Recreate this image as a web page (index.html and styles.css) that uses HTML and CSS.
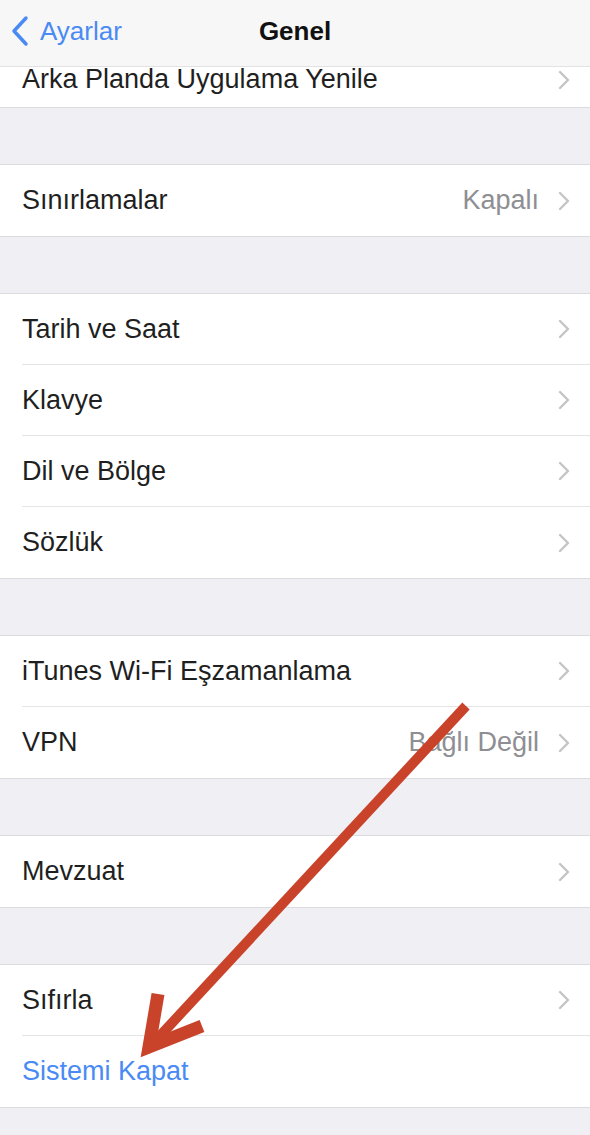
FILE: index.html
```html
<!DOCTYPE html>
<html lang="tr">
<head>
  <meta charset="UTF-8">
  <meta name="viewport" content="width=device-width, initial-scale=1.0">
  <title>Genel</title>
  <link rel="stylesheet" href="styles.css">
</head>
<body>
  <div class="screen">
    <header class="nav-bar">
      <a class="back" href="#">
        <svg class="back-icon" viewBox="0 0 20 32" width="20" height="32"><path d="M16 3 L4 16 L16 29" /></svg>
        <span>Ayarlar</span>
      </a>
      <h1>Genel</h1>
    </header>

    <div class="settings">
      <ul class="group first">
        <li class="row"><span class="label">Arka Planda Uygulama Yenile</span><svg class="chev" viewBox="0 0 12 20"><path d="M2 2 L10 10 L2 18" /></svg></li>
      </ul>

      <ul class="group">
        <li class="row"><span class="label">Sınırlamalar</span><span class="detail">Kapalı</span><svg class="chev" viewBox="0 0 12 20"><path d="M2 2 L10 10 L2 18" /></svg></li>
      </ul>

      <ul class="group">
        <li class="row"><span class="label">Tarih ve Saat</span><svg class="chev" viewBox="0 0 12 20"><path d="M2 2 L10 10 L2 18" /></svg></li>
        <li class="row"><span class="label">Klavye</span><svg class="chev" viewBox="0 0 12 20"><path d="M2 2 L10 10 L2 18" /></svg></li>
        <li class="row"><span class="label">Dil ve Bölge</span><svg class="chev" viewBox="0 0 12 20"><path d="M2 2 L10 10 L2 18" /></svg></li>
        <li class="row"><span class="label">Sözlük</span><svg class="chev" viewBox="0 0 12 20"><path d="M2 2 L10 10 L2 18" /></svg></li>
      </ul>

      <ul class="group">
        <li class="row"><span class="label">iTunes Wi-Fi Eşzamanlama</span><svg class="chev" viewBox="0 0 12 20"><path d="M2 2 L10 10 L2 18" /></svg></li>
        <li class="row"><span class="label">VPN</span><span class="detail">Bağlı Değil</span><svg class="chev" viewBox="0 0 12 20"><path d="M2 2 L10 10 L2 18" /></svg></li>
      </ul>

      <ul class="group">
        <li class="row"><span class="label">Mevzuat</span><svg class="chev" viewBox="0 0 12 20"><path d="M2 2 L10 10 L2 18" /></svg></li>
      </ul>

      <ul class="group">
        <li class="row"><span class="label">Sıfırla</span><svg class="chev" viewBox="0 0 12 20"><path d="M2 2 L10 10 L2 18" /></svg></li>
        <li class="row"><span class="label action">Sistemi Kapat</span></li>
      </ul>
    </div>

    <!-- annotation arrow pointing at the shut down row -->
    <svg class="pointer" viewBox="0 0 590 1135" width="590" height="1135">
      <line x1="466" y1="706" x2="158" y2="1038" />
      <polyline points="158,994 149,1047 202,1026" />
    </svg>
  </div>
</body>
</html>
```

FILE: styles.css
```css
body {
  margin: 0;
  background: #efeff4;
  font-family: 'Liberation Sans', Arial, sans-serif;
  color: #1f1f1f;
}
.screen {
  position: relative;
  width: 590px;
  height: 1135px;
  overflow: hidden;
}
.nav-bar {
  position: absolute;
  top: 0;
  left: 0;
  right: 0;
  height: 66px;
  background: rgba(247, 247, 247, 0.97);
  border-bottom: 1px solid #e2e2e4;
  display: flex;
  align-items: center;
  justify-content: center;
  z-index: 2;
}
.nav-bar h1 {
  margin: 0;
  font-size: 26px;
  font-weight: bold;
  color: #111;
  padding-bottom: 3px;
}
.back {
  position: absolute;
  left: 10px;
  top: 15px;
  display: flex;
  align-items: center;
  gap: 10px;
  color: #4a8af4;
  text-decoration: none;
  font-size: 26px;
}
.back-icon path {
  fill: none;
  stroke: #4a8af4;
  stroke-width: 3.5;
  stroke-linecap: round;
  stroke-linejoin: round;
}
.settings {
  padding-top: 36px;
}
.group {
  list-style: none;
  margin: 0 0 56px;
  padding: 0;
  background: #fff;
  border-top: 1px solid #dcdce0;
  border-bottom: 1px solid #dcdce0;
}
.group.first {
  border-top: none;
}
/* the top row is scrolled half under the bar */
.group.first .row {
  padding-top: 16px;
}
.row {
  box-sizing: border-box;
  display: flex;
  align-items: center;
  height: 71px;
  margin-left: 22px;
  padding-right: 20px;
  font-size: 27px;
  border-bottom: 1px solid #e4e4e6;
}
.row:last-child {
  border-bottom: none;
}
.label {
  flex: 1;
}
.label.action {
  color: #4a8af4;
}
.detail {
  color: #8e8e93;
  margin-right: 19px;
}
.chev {
  width: 12px;
  height: 20px;
}
.chev path {
  fill: none;
  stroke: #c4c4c8;
  stroke-width: 2.4;
  stroke-linecap: round;
  stroke-linejoin: round;
}
.pointer {
  position: absolute;
  top: 0;
  left: 0;
  pointer-events: none;
}
.pointer line,
.pointer polyline {
  fill: none;
  stroke: #c9432b;
}
.pointer line {
  stroke-width: 10;
}
.pointer polyline {
  stroke-width: 13;
  stroke-linejoin: miter;
  stroke-miterlimit: 10;
}
```
